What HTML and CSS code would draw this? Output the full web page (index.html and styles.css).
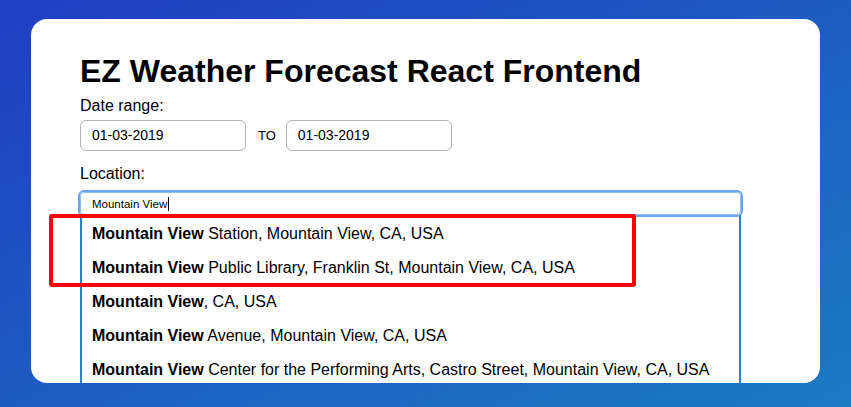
FILE: index.html
```html
<!DOCTYPE html>
<html>
<head>
<meta charset="utf-8">
<link rel="stylesheet" href="styles.css">
</head>
<body>
<div class="card">
  <h1 class="title">EZ Weather Forecast React Frontend</h1>
  <div class="label">Date range:</div>
  <div class="date-row">
    <div class="date-input">01-03-2019</div>
    <span class="to">TO</span>
    <div class="date-input">01-03-2019</div>
  </div>
  <div class="label label-loc">Location:</div>
  <div class="loc-input"><span>Mountain View</span><span class="caret"></span></div>
  <ul class="suggestions">
    <li><b>Mountain View</b> Station, Mountain View, CA, USA</li>
    <li><b>Mountain View</b> Public Library, Franklin St, Mountain View, CA, USA</li>
    <li><b>Mountain View</b>, CA, USA</li>
    <li><b>Mountain View</b> Avenue, Mountain View, CA, USA</li>
    <li><b>Mountain View</b> Center for the Performing Arts, Castro Street, Mountain View, CA, USA</li>
  </ul>
  <div class="highlight"></div>
</div>
</body>
</html>
```
FILE: styles.css
```css
html, body {
  margin: 0;
  padding: 0;
}
body {
  width: 851px;
  height: 407px;
  overflow: hidden;
  background: linear-gradient(to bottom right, #1f3dc2, #1b7bc1);
  font-family: "Liberation Sans", Arial, sans-serif;
  color: #000;
  padding-top: 19px;
  box-sizing: border-box;
}
.card {
  position: relative;
  margin-left: 31px;
  width: 789px;
  height: 364px;
  background: #fff;
  border-radius: 16px;
  overflow: hidden;
  box-sizing: border-box;
  padding: 32px 79px 0 49px;
}
.title {
  margin: 0;
  font-size: 32px;
  line-height: 40px;
  font-weight: bold;
  color: #000;
}
.label {
  margin-top: 5px;
  font-size: 16px;
  line-height: 20px;
}
.label-loc {
  margin-top: 13px;
}
.date-row {
  display: flex;
  align-items: center;
  margin-top: 4px;
}
.date-input {
  width: 166px;
  height: 31px;
  box-sizing: border-box;
  border: 1px solid #b4b4b4;
  border-radius: 6px;
  padding-left: 11px;
  font-size: 14px;
  line-height: 29px;
}
.to {
  font-size: 13px;
  margin: 0 10px 0 12px;
}
.loc-input {
  margin-top: 8px;
  width: 661px;
  height: 23px;
  box-sizing: border-box;
  border: 1px solid #8fbdf3;
  border-radius: 4px;
  box-shadow: 0 0 0 2px #6aa6f2;
  padding-left: 11px;
  font-size: 11.5px;
  line-height: 22px;
  display: flex;
  align-items: center;
}
.caret {
  display: inline-block;
  width: 1px;
  height: 14px;
  background: #000;
  margin-left: 1px;
}
.suggestions {
  list-style: none;
  margin: 0;
  padding: 2px 0 0 10px;
  width: 661px;
  height: 200px;
  box-sizing: border-box;
  border-left: 2px solid #2b7fcf;
  border-right: 2px solid #2b7fcf;
}
.suggestions li {
  font-size: 16px;
  line-height: 34px;
  white-space: nowrap;
}
.highlight {
  position: absolute;
  left: 18px;
  top: 195px;
  width: 587px;
  height: 73px;
  box-sizing: border-box;
  border: 4px solid #ff0000;
  border-radius: 3px;
}
```
